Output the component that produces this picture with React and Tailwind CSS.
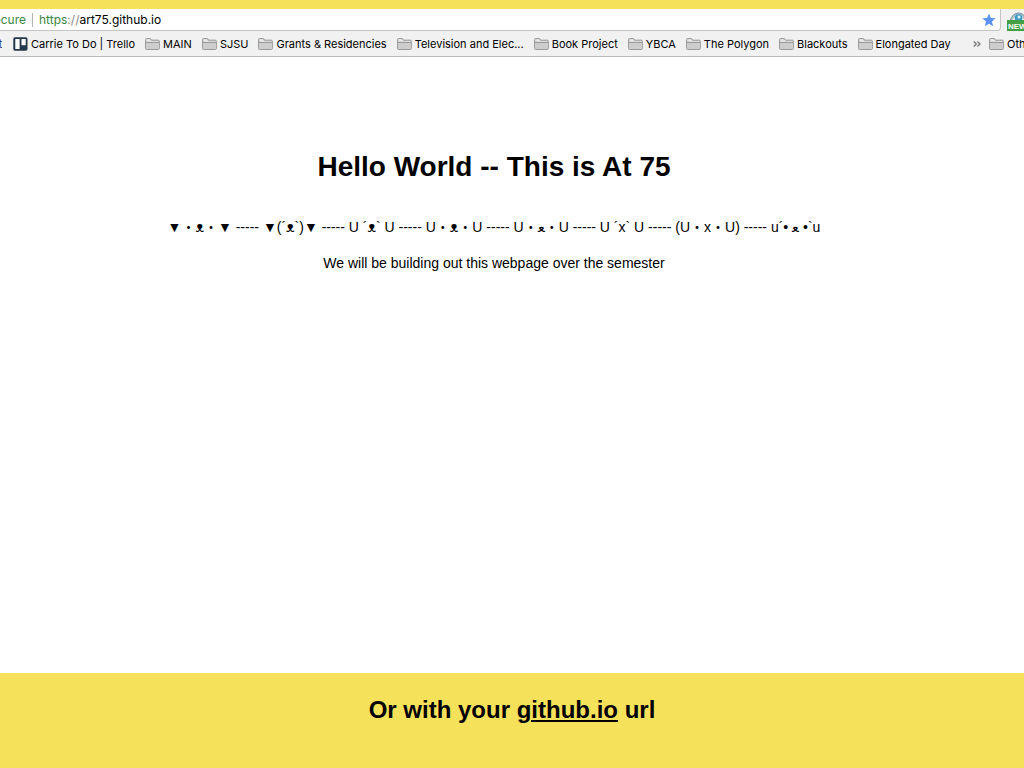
const folders = [
  "MAIN",
  "SJSU",
  "Grants & Residencies",
  "Television and Elec...",
  "Book Project",
  "YBCA",
  "The Polygon",
  "Blackouts",
  "Elongated Day",
];

function FolderIcon() {
  return (
    <svg className="h-3 w-[15px] shrink-0" viewBox="0 0 15 12" aria-hidden="true">
      <path
        d="M.6 10.700V1.500Q.6.6 1.500.6h3.700q.6 0 .8.6l.4 1h7q.9 0 .9.9v7.600q0 .7-.9.7H1.500Q.6 11.400.6 10.700Z"
        fill="#e6e6e6"
        stroke="#929292"
      />
      <path d="M1.100 4.800h12.700v6.200H1.100Z" fill="#cdcdcd" />
      <path d="M.9 4.400h13.200" stroke="#929292" />
    </svg>
  );
}

function TrelloIcon() {
  return (
    <svg className="h-[14px] w-[15px] shrink-0" viewBox="0 0 15 14" aria-hidden="true">
      <rect x=".3" y=".3" width="14.2" height="13.4" rx="1.6" fill="#26394b" />
      <rect x="2.3" y="2" width="4.3" height="10" rx=".5" fill="#fff" />
      <rect x="8.5" y="2" width="4.2" height="6.3" rx=".5" fill="#fff" />
    </svg>
  );
}

function ExtensionIcon() {
  return (
    <svg className="h-[19px] w-7 shrink-0" viewBox="0 0 28 19" aria-hidden="true">
      <path d="M3 9Q5.500 1 11.500 1T20 9Z" fill="#b3c4cb" stroke="#71909e" />
      <path d="M5 9Q7 4 11 4t7 5Z" fill="#e7f3f7" />
      <circle cx="11.500" cy="6" r="3.800" fill="#3e9cc4" />
      <circle cx="12" cy="5" r="1.500" fill="#d7f3fc" />
      <rect y="8" width="28" height="11" fill="#43a047" />
      <text x="1" y="17" fill="#fff" fontFamily="Liberation Sans, sans-serif" fontWeight="700" fontSize="8">
        NEW
      </text>
    </svg>
  );
}

function Bookmark({ icon, children }) {
  return (
    <button type="button" className="flex shrink-0 items-center gap-[3px] whitespace-nowrap">
      {icon}
      {children}
    </button>
  );
}

export default function App() {
  return (
    <div className="flex min-h-screen flex-col overflow-hidden bg-[#f6e25a] pt-[9px] text-black">
      <header className="border-b border-[#b9b9b9] bg-[#f1f1f1] font-['Inter',sans-serif]">
        <div className="flex h-[22px]">
          <div className="flex min-w-0 flex-1 items-center rounded-br-sm border-r border-b border-[#c4c4c4] bg-white pr-1 text-[12px]">
            <span className="flex w-[26px] shrink-0 justify-end overflow-hidden text-[#3b853f]">Secure</span>
            <span className="mx-[6px] h-[14px] w-px shrink-0 bg-[#b5b5b5]" />
            <label htmlFor="address" className="text-[#3b853f]">
              https<span className="text-[#8a8a8a]">://</span>
            </label>
            <input
              id="address"
              type="text"
              defaultValue="art75.github.io"
              className="min-w-0 flex-1 bg-transparent outline-none"
            />
            <button type="button" aria-label="Bookmark this page" className="shrink-0">
              <svg className="h-[14px] w-[14px]" viewBox="0 0 14 14" aria-hidden="true">
                <path d="m7 .4 1.900 4.500 4.800.4-3.700 3.200 1.100 4.800L7 10.700l-4.100 2.600L4 8.500.3 5.300l4.800-.4Z" fill="#5b92f3" />
              </svg>
            </button>
          </div>
          <button type="button" aria-label="New extension" className="flex w-[23px] shrink-0 items-end overflow-hidden pl-[6px]">
            <ExtensionIcon />
          </button>
        </div>
        <nav aria-label="Bookmarks" className="flex h-[25px] items-center gap-[10px] overflow-hidden pt-px text-[11px]">
          <button type="button" className="flex w-[3px] shrink-0 justify-end overflow-hidden pr-px text-[#20206a]">Art</button>
          <Bookmark icon={<TrelloIcon />}>Carrie To Do | Trello</Bookmark>
          {folders.map((name) => (
            <Bookmark key={name} icon={<FolderIcon />}>{name}</Bookmark>
          ))}
          <div className="ml-auto flex w-[51px] shrink-0 items-center gap-2 overflow-hidden">
            <button type="button" aria-label="More bookmarks" className="shrink-0">
              <svg className="h-2 w-2" viewBox="0 0 8 8" fill="none" stroke="#777" strokeWidth="1.300" aria-hidden="true">
                <path d="m.7 1.500 2.700 2.500L.7 6.500M4.400 1.500l2.700 2.500-2.700 2.500" />
              </svg>
            </button>
            <Bookmark icon={<FolderIcon />}>Other Bookmarks</Bookmark>
          </div>
        </nav>
      </header>
      <main className="flex-1 bg-white pt-[92px] pr-9 text-center font-['Liberation_Sans','Noto_Sans_CJK_JP',sans-serif] text-[14px] leading-5">
        <h1 className="text-[28px] leading-9 font-bold">Hello World -- This is At 75</h1>
        <p className="mt-8">
          ▼・ᴥ・▼ ----- ▼(´ᴥ`)▼ ----- U ´ᴥ` U ----- U・ᴥ・U ----- U・ﻌ・U ----- U ´x` U ----- (U・x・U) ----- u´• ﻌ •`u
        </p>
        <p className="mt-4">We will be building out this webpage over the semester</p>
      </main>
      <footer className="h-[95px] pt-[21px] text-center font-['Liberation_Sans',sans-serif] text-[24px] leading-8 font-bold">
        Or with your <a href="https://github.io" className="underline decoration-2 underline-offset-2">github.io</a> url
      </footer>
    </div>
  );
}
